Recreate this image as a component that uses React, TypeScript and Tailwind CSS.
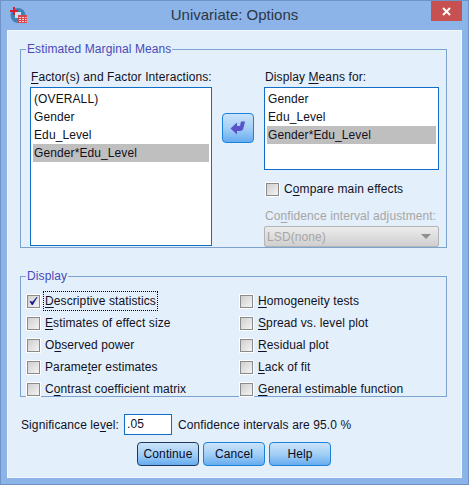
import React from "react";

function Check({ label, checked, focus }: { label: [string, string, string]; checked?: boolean; focus?: boolean }) {
  return (
    <div className="flex items-center h-[22px]">
      <div className="w-[13px] h-[13px] border border-[#8a8a8a] outline outline-1 outline-white bg-gradient-to-br from-[#cfcfcf] to-[#f4f4f4] flex items-center justify-center shrink-0">
        {checked && (
          <svg width="13" height="13" viewBox="0 0 14 14">
            <path d="M2.5 7 L5.5 11.5 L11.5 1.5 L5.8 7.8 Z" fill="#15158c" stroke="#15158c" strokeWidth="1" />
          </svg>
        )}
      </div>
      <span className={`ml-[3px] px-[1px] leading-[18px] whitespace-nowrap ${focus ? "border border-dotted border-black" : "border border-transparent"}`}>
        {label[0]}
        <u className="underline-offset-2">{label[1]}</u>
        {label[2]}
      </span>
    </div>
  );
}

function Btn({ children, focus }: { children: React.ReactNode; focus?: boolean }) {
  return (
    <button
      className={`w-[62px] h-[24px] rounded-[4px] border bg-gradient-to-b from-[#cbe3fa] via-[#a3cff6] to-[#66acef] text-[#0a0a1e] text-[12px] ${focus ? "border-[#1c3a5e]" : "border-[#1a82dc]"}`}
    >
      {children}
    </button>
  );
}

export default function App() {
  const left = ["(OVERALL)", "Gender", "Edu_Level", "Gender*Edu_Level"];
  const right = ["Gender", "Edu_Level", "Gender*Edu_Level"];

  return (
    <div className="w-[469px] h-[485px] bg-[#8cb4e8] border border-[#6f93c6] flex flex-col text-[12px] text-[#111122] tracking-[0.1px] font-['Liberation_Sans',Arial,sans-serif] overflow-hidden">
      {/* Title bar */}
      <div className="relative h-[29px] shrink-0 flex items-center justify-center">
        <svg className="absolute left-[9px] top-[6px]" width="17" height="17" viewBox="0 0 17 17">
          <circle cx="8" cy="8.500" r="7.500" fill="#3f82b8" />
          <rect x="5" y="5" width="6" height="6" fill="#cfe0f2" />
          <path d="M3 0h2v3h3v2H5v3H3V5H0V3h3z" fill="#d81f2c" />
          <rect x="8" y="8" width="9" height="8" fill="#d8434c" />
          <path d="M9 10h2v1H9zM12 10h2v1h-2zM15 10h1.500v1H15zM9 12h2v1H9zM12 12h2v1h-2zM15 12h1.500v1H15zM9 14h2v1H9zM12 14h2v1h-2zM15 14h1.500v1H15z" fill="#f6d5d8" />
        </svg>
        <span className="text-[15px] text-[#2c3644] tracking-normal">Univariate: Options</span>
        <div className="absolute right-[6px] top-0 w-[31px] h-[20px] bg-[#c75050] flex items-center justify-center">
          <svg width="9" height="9" viewBox="0 0 9 9">
            <path d="M1 1 L8 8 M8 1 L1 8" stroke="#fff" strokeWidth="2" />
          </svg>
        </div>
      </div>

      {/* Dialog body */}
      <div className="mx-[6px] mb-[6px] flex-1 bg-[#e3effb] border border-[#f2f7fd] pl-[12px] pr-[14px] flex flex-col">
        <fieldset className="mt-[11px] h-[206px] border border-[#7ca3cd]">
          <legend className="ml-[5px] px-[1px] text-[#4a4ab8] leading-[14px]">Estimated Marginal Means</legend>
          <div className="flex mt-[14px] pl-[9px]">
            <div className="w-[182px]">
              <div className="h-[17px] leading-[14px] pl-[1px] whitespace-nowrap">
                <u className="underline-offset-2">F</u>actor(s) and Factor Interactions:
              </div>
              <div className="h-[159px] border border-[#0f6fc6] bg-white pt-[2px] px-[2px]">
                {left.map((t) => (
                  <div key={t} className={`h-[18px] leading-[18px] pl-[1px] ${t === "Gender*Edu_Level" ? "bg-[#bfbfbf]" : ""}`}>
                    {t}
                  </div>
                ))}
              </div>
            </div>

            <div className="w-[52px] pl-[10px] pt-[43px]">
              <div className="w-[32px] h-[30px] rounded-[4px] border border-[#1a82dc] bg-gradient-to-b from-[#cbe3fa] via-[#a3cff6] to-[#66acef] flex items-center justify-center">
                <svg width="16" height="14" viewBox="0 0 16 14">
                  <path d="M0.500 7.500 L7 1.500 L7 5 L10 5 L11 0.500 L15 0.500 L13.500 7 C13 9 12 10 10 10 L7 10 L7 13.500 Z" fill="#5a53c9" />
                </svg>
              </div>
            </div>

            <div className="w-[175px]">
              <div className="h-[17px] leading-[14px] pl-[1px]">
                Display <u className="underline-offset-2">M</u>eans for:
              </div>
              <div className="h-[83px] border border-[#0f6fc6] bg-white pt-[2px] px-[2px]">
                {right.map((t) => (
                  <div key={t} className={`h-[18px] leading-[18px] pl-[1px] ${t === "Gender*Edu_Level" ? "bg-[#bfbfbf]" : ""}`}>
                    {t}
                  </div>
                ))}
              </div>
              <div className="mt-[8px] ml-[2px]">
                <Check label={["C", "o", "mpare main effects"]} />
              </div>
              <div className="mt-[9px] h-[17px] leading-[14px] pl-[1px] text-[#a6a6a6] whitespace-nowrap">
                Co<u className="underline-offset-2">n</u>fidence interval adjustment:
              </div>
              <div className="h-[21px] rounded-[2px] border border-[#b4b4b4] bg-gradient-to-b from-[#ececec] to-[#cfcfcf] text-[#a6a6a6] flex items-center justify-between pl-[2px] pr-[7px]">
                <span>LSD(none)</span>
                <div className="w-0 h-0 border-x-[5px] border-x-transparent border-t-[5px] border-t-[#8f8f8f]" />
              </div>
            </div>
          </div>
        </fieldset>

        <fieldset className="mt-[21px] h-[128px] border border-[#7ca3cd]">
          <legend className="ml-[5px] px-[1px] text-[#4a4ab8] leading-[14px]">Display</legend>
          <div className="flex mt-[7px] pl-[6px]">
            <div className="w-[213px]">
              <Check checked focus label={["", "D", "escriptive statistics"]} />
              <Check label={["", "E", "stimates of effect size"]} />
              <Check label={["O", "b", "served power"]} />
              <Check label={["Parame", "t", "er estimates"]} />
              <Check label={["C", "o", "ntrast coefficient matrix"]} />
            </div>
            <div>
              <Check label={["", "H", "omogeneity tests"]} />
              <Check label={["", "S", "pread vs. level plot"]} />
              <Check label={["", "R", "esidual plot"]} />
              <Check label={["", "L", "ack of fit"]} />
              <Check label={["", "G", "eneral estimable function"]} />
            </div>
          </div>
        </fieldset>

        <div className="mt-[17px] flex items-center h-[21px] pl-[1px] whitespace-nowrap">
          <span>
            Significance le<u className="underline-offset-2">v</u>el:
          </span>
          <div className="ml-[5px] w-[48px] h-[21px] border border-[#0f6fc6] bg-white pl-[2px] leading-[19px]">.05</div>
          <span className="ml-[6px]">Confidence intervals are 95.0 %</span>
        </div>

        <div className="mt-[7px] flex justify-center gap-[4px] pl-[1px]">
          <Btn focus>Continue</Btn>
          <Btn>Cancel</Btn>
          <Btn>Help</Btn>
        </div>
      </div>
    </div>
  );
}
